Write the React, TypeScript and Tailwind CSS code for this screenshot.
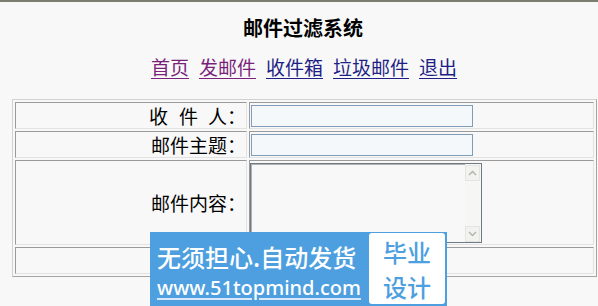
import React from 'react';

const cjk = "font-['SimSun','Noto_Sans_CJK_SC',sans-serif]";

const cellInset = 'p-0 border border-t-[#9a9a9a] border-l-[#9a9a9a] border-b-[#e2e2e2] border-r-[#e2e2e2]';

const Label: React.FC<{ children: React.ReactNode }> = ({ children }) => (
  <div className="flex h-full w-[230px] items-center justify-end text-[19px] leading-none text-black">{children}</div>
);

const TextBox: React.FC = () => (
  <div className="ml-[1px] h-[22px] w-[222px] border border-[#7f9db9] bg-[#f4f8fb]" />
);

const ScrollBtn: React.FC<{ up?: boolean }> = ({ up }) => (
  <div className="flex h-[16px] w-[15px] items-center justify-center border border-[#e4e4e0] bg-[#f2f2ee]">
    <svg width="9" height="6" viewBox="0 0 9 6">
      <path d={up ? 'M1 5 L4.5 1.5 L8 5' : 'M1 1 L4.5 4.5 L8 1'} fill="none" stroke="#b4b4b0" strokeWidth="1.5" />
    </svg>
  </div>
);

const App: React.FC = () => {
  return (
    <div className={`relative h-[306px] w-[598px] overflow-hidden border-t-2 border-[#7c7c70] bg-[#f8f8f8] ${cjk}`}>
      <h1 className="pt-[15px] pl-[8px] text-center text-[20px] font-bold leading-[22px] text-black">邮件过滤系统</h1>

      <nav className="mt-[17px] flex justify-center gap-[10px] pl-[10px] text-[19px] leading-[22px]">
        <a href="#" className="text-[#7a1f7a] underline underline-offset-[3px]">首页</a>
        <a href="#" className="text-[#7a1f7a] underline underline-offset-[3px]">发邮件</a>
        <a href="#" className="text-[#1e1e86] underline underline-offset-[3px]">收件箱</a>
        <a href="#" className="text-[#1e1e86] underline underline-offset-[3px]">垃圾邮件</a>
        <a href="#" className="text-[#1e1e86] underline underline-offset-[3px]">退出</a>
      </nav>

      <table className="ml-[12px] mt-[21px] border-separate border-spacing-[2px] border border-t-[#d2d2ce] border-l-[#d2d2ce] border-b-[#a4a4a0] border-r-[#a4a4a0]">
        <tbody>
          <tr>
            <td className={cellInset}>
              <div className="h-[25px]">
                <Label>
                  收<span className="inline-block w-[11px]" />件<span className="inline-block w-[10px]" />人：
                </Label>
              </div>
            </td>
            <td className={cellInset}>
              <div className="flex h-[25px] w-[343px] items-center">
                <TextBox />
              </div>
            </td>
          </tr>
          <tr>
            <td className={cellInset}>
              <div className="h-[25px]">
                <Label>邮件主题：</Label>
              </div>
            </td>
            <td className={cellInset}>
              <div className="flex h-[25px] w-[343px] items-center">
                <TextBox />
              </div>
            </td>
          </tr>
          <tr>
            <td className={cellInset}>
              <div className="h-[83px]">
                <Label>邮件内容：</Label>
              </div>
            </td>
            <td className={cellInset}>
              <div className="flex h-[83px] w-[343px] items-center">
                <div className="flex h-[80px] w-[232px] border border-[#6e7a85] bg-[#f8f8f8]">
                  <div className="flex-1 border-t border-l border-[#b0b0b0]" />
                  <div className="flex w-[16px] flex-col justify-between bg-[#f6f6f4] pt-[1px]">
                    <ScrollBtn up />
                    <ScrollBtn />
                  </div>
                </div>
              </div>
            </td>
          </tr>
          <tr>
            <td className={cellInset}>
              <div className="h-[25px] w-[230px]" />
            </td>
            <td className={cellInset}>
              <div className="h-[25px] w-[343px]" />
            </td>
          </tr>
        </tbody>
      </table>

      <div className="absolute left-[150px] top-[230px] flex h-[76px] w-[297px] bg-[#4d9fe0] pl-[7px] pt-[1px]">
        <div className="flex flex-col text-white">
          <div className="mt-[9px] text-[24px] font-medium leading-[30px]">无须担心.自动发货</div>
          <div className="mt-[4px] font-['Noto_Sans',sans-serif] text-[20px] font-medium leading-[24px] underline decoration-[#d8e8f8] underline-offset-[3px]">www.51topmind.com</div>
        </div>
        <div className="ml-auto mr-[2px] flex h-[71px] w-[76px] flex-col items-center justify-center rounded-[3px] bg-white text-[24px] font-medium leading-[35px] text-[#4d9fe0]">
          <span>毕业</span>
          <span>设计</span>
        </div>
      </div>
    </div>
  );
};

export default App;
